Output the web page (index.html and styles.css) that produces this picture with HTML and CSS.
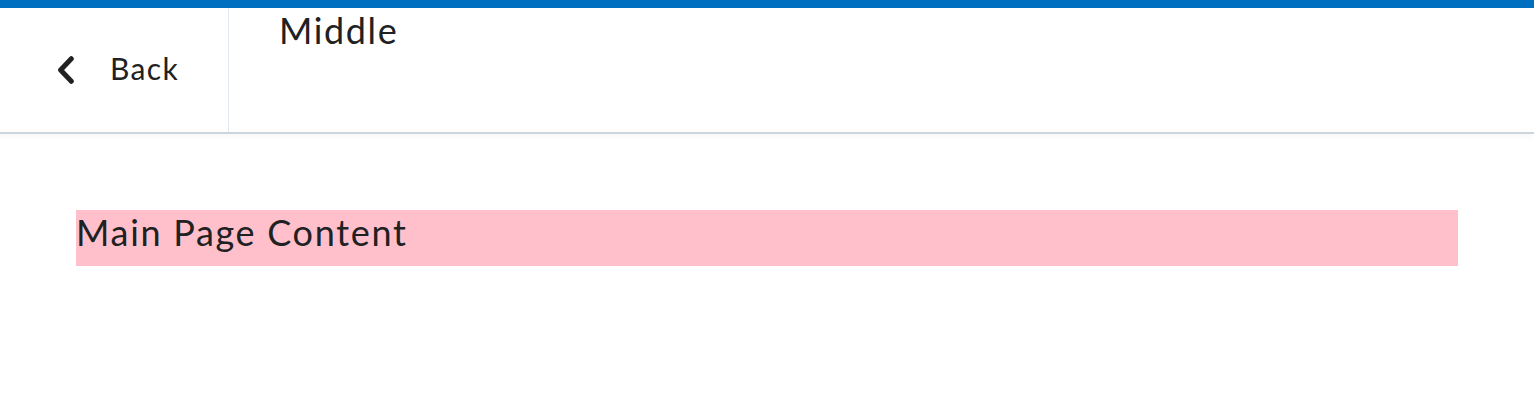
FILE: index.html
```html
<!DOCTYPE html>
<html lang="en">
<head>
<meta charset="utf-8">
<title>Navigation</title>
<link rel="stylesheet" href="styles.css">
</head>
<body>
<div class="topbar"></div>
<header class="header">
  <a class="back" href="#">
    <svg class="chevron" width="18" height="28" viewBox="0 0 18 28" aria-hidden="true">
      <path d="M15.3 2.7 L4.6 14 L15.3 25.3" fill="none" stroke="#202122" stroke-width="5" stroke-linecap="round" stroke-linejoin="round"/>
    </svg>
    <span class="back-text">Back</span>
  </a>
  <div class="middle">Middle</div>
</header>
<main class="main">
  <div class="content">Main Page Content</div>
</main>
</body>
</html>
```
FILE: styles.css
```css
html, body {
  margin: 0;
  padding: 0;
  background: #ffffff;
  font-family: Lato, "Open Sans", sans-serif;
  color: #202122;
}
.topbar {
  height: 8px;
  background: #006fbf;
}
.header {
  display: flex;
  height: 124px;
  border-bottom: 2px solid #cdd5dc;
  box-shadow: 0 3px 6px rgba(0, 0, 0, 0.03);
}
.back {
  display: flex;
  align-items: center;
  gap: 36px;
  width: 172px;
  padding-left: 56px;
  border-right: 1px solid #e3e9f1;
  color: #202122;
  text-decoration: none;
}
.chevron {
  display: block;
}
.back-text {
  font-size: 30px;
  letter-spacing: 0.045em;
  margin-bottom: 5px;
}
.middle {
  padding-left: 50px;
  font-size: 36px;
  line-height: normal;
  letter-spacing: 0.045em;
}
.main {
  padding: 76px;
}
.content {
  background: #ffc0cb;
  font-size: 36px;
  line-height: 43px;
  height: 56px;
  padding-top: 1px;
  letter-spacing: 0.047em;
  box-sizing: border-box;
}
```
